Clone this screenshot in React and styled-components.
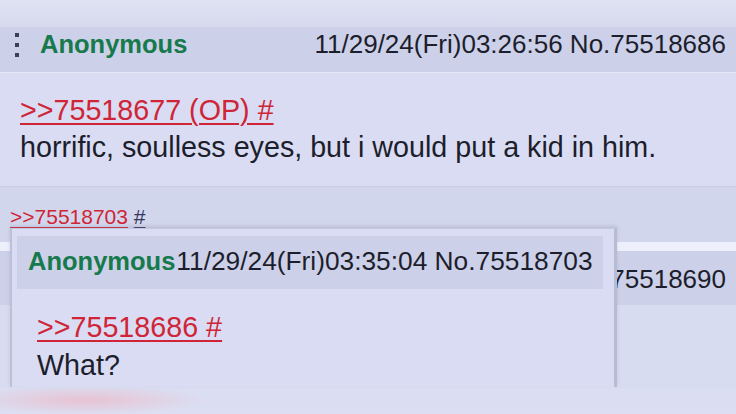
import React from "react";
import styled, { createGlobalStyle } from "styled-components";

const GlobalStyle = createGlobalStyle`
    html, body {
        margin: 0;
        padding: 0;
        background: #d3d7ed;
    }
    body {
        font-family: 'Liberation Sans', Arial, sans-serif;
        color: #1d1e2c;
    }
`;

const Page = styled.div`
    position: relative;
    width: 736px;
    height: 414px;
    overflow: hidden;
    display: flex;
    flex-direction: column;
    background: #d3d7ed;
`;

const TopStrip = styled.div`
    height: 27px;
    background: linear-gradient(180deg, #dfe2f1 0%, #d7daee 100%);
`;

const PostHeader = styled.div`
    display: flex;
    align-items: flex-start;
    box-sizing: border-box;
    height: ${(p) => p.$height}px;
    padding: ${(p) => p.$padTop}px 10px 0 ${(p) => p.$padLeft}px;
    background: #ccd0e8;
    border-bottom: 1px solid ${(p) => (p.$line ? "#e3e6f6" : "transparent")};
    font-size: 26px;
    line-height: 26px;
    white-space: nowrap;
`;

const MenuDots = styled.div`
    display: flex;
    flex-direction: column;
    gap: 6px;
    margin: 2px 21px 0 0;

    span {
        width: 4px;
        height: 4px;
        background: #3a3f5c;
    }
`;

const Name = styled.span`
    color: #167a4c;
    font-weight: bold;
    font-size: 25.5px;
`;

const DateLine = styled.span`
    margin-left: ${(p) => (p.$right ? "auto" : "1px")};
    font-size: ${(p) => (p.$right ? 26 : 26.3)}px;
    color: #1d1e2c;
`;

const PostBody = styled.div`
    box-sizing: border-box;
    height: ${(p) => p.$height}px;
    padding: 19px 0 0 20px;
    background: #d9dcf2;
    font-size: 28.7px;
    line-height: ${(p) => p.$lh}px;
`;

const QuoteLink = styled.a`
    color: #cf2536;
    text-decoration: underline;
    text-decoration-thickness: ${(p) => (p.$small ? 1 : 2)}px;
    text-underline-offset: 3px;
    font-size: ${(p) => (p.$small ? 21 : 28.7)}px;
`;

const Hash = styled.span`
    color: ${(p) => (p.$navy ? "#34375e" : "#cf2536")};
    text-decoration: underline;
    text-decoration-thickness: ${(p) => (p.$small ? 1 : 2)}px;
    text-underline-offset: 3px;
`;

const Message = styled.div`
    color: #1d1e2c;
`;

const BacklinkBar = styled.div`
    box-sizing: border-box;
    height: 56px;
    padding: 19px 0 0 10px;
    background: #d2d6ec;
    border-top: 1px solid #c7cbe3;
    font-size: 21px;
    line-height: 21px;
`;

const Stripe = styled.div`
    height: 9px;
    background: #edf0fa;
`;

const BackBody = styled.div`
    height: 83px;
    background: #d8dcf1;
`;

const BottomStrip = styled.div`
    height: 26px;
    background:
        radial-gradient(ellipse 125px 15px at 85px 12px, rgba(234, 188, 202, 0.8), rgba(234, 188, 202, 0) 100%),
        linear-gradient(180deg, #dadef2, #dcdff3);
`;

// hover preview of the quoted reply, floats over the post below it
const Popup = styled.div`
    position: absolute;
    left: 10px;
    top: 228px;
    width: 607px;
    height: 159px;
    box-sizing: border-box;
    padding: 7px 11px 0 5px;
    background: #d9dcf2;
    border-left: 2px solid #bcc1d9;
    border-right: 3px solid #b7bcd5;
    border-top: 1px solid #c3c7df;
    box-shadow: 0 -2px 3px rgba(120, 126, 160, 0.25);
`;

const PopupBody = styled.div`
    padding: 19px 0 0 20px;
    font-size: 28.7px;
    line-height: 38px;
`;

export default function App() {
    return (
        <Page>
            <GlobalStyle />
            <TopStrip />
            <PostHeader $height={46} $padTop={4} $padLeft={15} $line>
                <MenuDots>
                    <span />
                    <span />
                    <span />
                </MenuDots>
                <Name>Anonymous</Name>
                <DateLine $right>11/29/24(Fri)03:26:56 No.75518686</DateLine>
            </PostHeader>
            <PostBody $height={113} $lh={37}>
                <div>
                    <QuoteLink>&gt;&gt;75518677 (OP) #</QuoteLink>
                </div>
                <Message>horrific, soulless eyes, but i would put a kid in him.</Message>
            </PostBody>
            <BacklinkBar>
                <QuoteLink $small>&gt;&gt;75518703</QuoteLink>{" "}
                <Hash $navy $small>#</Hash>
            </BacklinkBar>
            <Stripe />
            <PostHeader $height={54} $padTop={15} $padLeft={15}>
                <Name>Anonymous</Name>
                <DateLine $right>11/29/24(Fri)03:31:12 No.75518690</DateLine>
            </PostHeader>
            <BackBody />
            <BottomStrip />

            <Popup>
                <PostHeader $height={53} $padTop={12} $padLeft={11}>
                    <Name>Anonymous</Name>
                    <DateLine>11/29/24(Fri)03:35:04 No.75518703</DateLine>
                </PostHeader>
                <PopupBody>
                    <div>
                        <QuoteLink>&gt;&gt;75518686 #</QuoteLink>
                    </div>
                    <Message>What?</Message>
                </PopupBody>
            </Popup>
        </Page>
    );
}
